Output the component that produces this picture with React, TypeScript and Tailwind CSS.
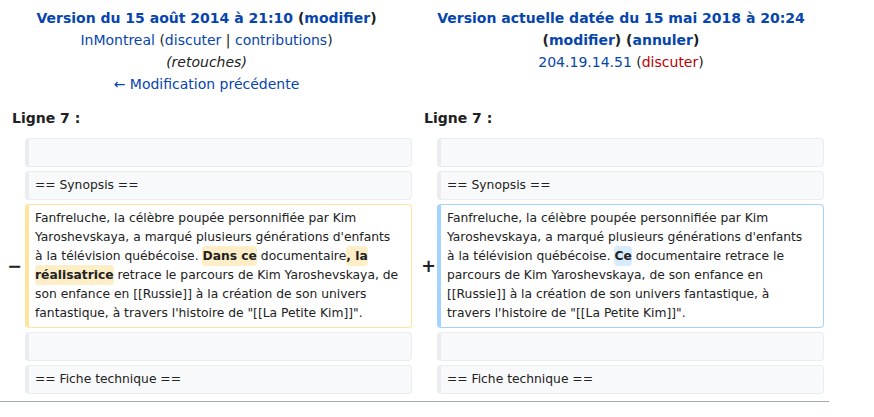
import React from "react";

const A = ({ children, red }: { children: React.ReactNode; red?: boolean }) => (
  <span className={red ? "text-[#ba0000]" : "text-[#0645ad]"}>{children}</span>
);

const Del = ({ children }: { children: React.ReactNode }) => (
  <span className="font-bold bg-[#feeec8] rounded-[4px] py-[3px]">{children}</span>
);
const Add = ({ children }: { children: React.ReactNode }) => (
  <span className="font-bold bg-[#d8ecff] rounded-[4px] py-[3px]">{children}</span>
);

const Ctx = ({ children }: { children?: React.ReactNode }) => (
  <div className="bg-[#f8f9fa] border border-[#eaecf0] border-l-4 rounded-[4px] px-[6px] py-[4px] h-[29px] text-[12.3px] leading-[19px] text-[#222] whitespace-nowrap">
    {children}
  </div>
);

export default function App() {
  return (
    <div className="w-[874px] h-[417px] bg-white font-['DejaVu_Sans',sans-serif] text-[#202122] overflow-hidden">
      <div className="w-[829px]">
        {/* headers */}
        <div className="grid grid-cols-[413px_416px] pt-[7px] text-[14px] leading-[22px] text-center">
          <div>
            <div className="font-bold whitespace-nowrap">
              <A>Version du 15 août 2014 à 21:10</A> (<A>modifier</A>)
            </div>
            <div>
              <A>InMontreal</A> (<A>discuter</A> | <A>contributions</A>)
            </div>
            <div className="italic text-[#202122]">(retouches)</div>
            <div>
              <A>← Modification précédente</A>
            </div>
          </div>
          <div>
            <div className="font-bold whitespace-nowrap">
              <A>Version actuelle datée du 15 mai 2018 à 20:24</A>
            </div>
            <div className="font-bold">
              (<A>modifier</A>) (<A>annuler</A>)
            </div>
            <div>
              <A>204.19.14.51</A> (<A red>discuter</A>)
            </div>
          </div>
        </div>

        {/* line numbers */}
        <div className="grid grid-cols-[412px_417px] mt-[12px] text-[14px] leading-[22px] font-bold">
          <div className="pl-[12px]">Ligne 7 :</div>
          <div className="pl-[12px]">Ligne 7 :</div>
        </div>

        {/* diff rows */}
        <div className="grid grid-cols-[25px_387px_25px_387px] gap-y-[4px] mt-[9px]">
          <div />
          <Ctx />
          <div />
          <Ctx />

          <div />
          <Ctx>== Synopsis ==</Ctx>
          <div />
          <Ctx>== Synopsis ==</Ctx>

          <div className="flex items-center justify-end pr-[3px] text-[17.5px] font-bold leading-[21px] text-[#202122]">−</div>
          <div className="bg-white border border-[#ffe49c] border-l-4 rounded-[4px] px-[6px] py-[4px] text-[12.3px] leading-[19px] text-[#222] whitespace-nowrap">
            Fanfreluche, la célèbre poupée personnifiée par Kim
            <br />
            Yaroshevskaya, a marqué plusieurs générations d'enfants
            <br />
            à la télévision québécoise. <Del>Dans ce</Del> documentaire<Del>, la</Del>
            <br />
            <Del>réalisatrice</Del> retrace le parcours de Kim Yaroshevskaya, de
            <br />
            son enfance en [[Russie]] à la création de son univers
            <br />
            fantastique, à travers l'histoire de "[[La Petite Kim]]".
          </div>
          <div className="flex items-center justify-end pr-[1px] text-[17.5px] font-bold leading-[21px] text-[#202122]">+</div>
          <div className="bg-white border border-[#a3d3ff] border-l-4 rounded-[4px] px-[6px] py-[4px] text-[12.3px] leading-[19px] text-[#222] whitespace-nowrap">
            Fanfreluche, la célèbre poupée personnifiée par Kim
            <br />
            Yaroshevskaya, a marqué plusieurs générations d'enfants
            <br />
            à la télévision québécoise. <Add>Ce</Add> documentaire retrace le
            <br />
            parcours de Kim Yaroshevskaya, de son enfance en
            <br />
            [[Russie]] à la création de son univers fantastique, à
            <br />
            travers l'histoire de "[[La Petite Kim]]".
          </div>

          <div />
          <Ctx />
          <div />
          <Ctx />

          <div />
          <Ctx>== Fiche technique ==</Ctx>
          <div />
          <Ctx>== Fiche technique ==</Ctx>
        </div>

        <div className="mt-[7px] border-t border-[#a2a9b1]" />
      </div>
    </div>
  );
}
